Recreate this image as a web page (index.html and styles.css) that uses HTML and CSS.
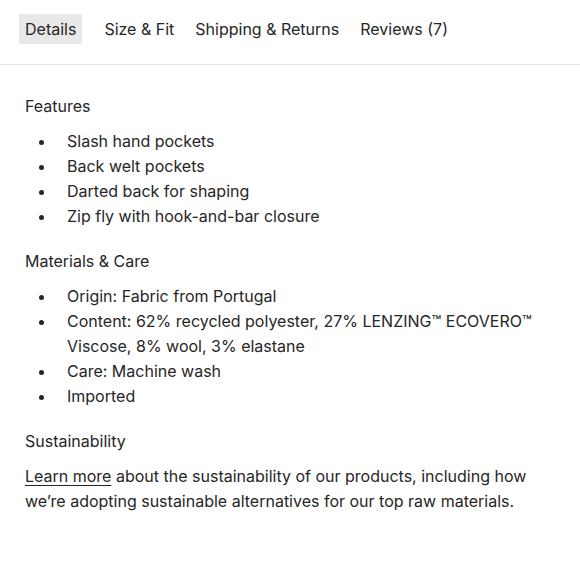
FILE: index.html
```html
<!DOCTYPE html>
<html>
<head>
<meta charset="utf-8">
<link rel="stylesheet" href="styles.css">
</head>
<body>
<nav class="tabs">
  <span class="tab active">Details</span>
  <span class="tab">Size &amp; Fit</span>
  <span class="tab">Shipping &amp; Returns</span>
  <span class="tab">Reviews (7)</span>
</nav>
<main class="content">
  <h3 class="heading">Features</h3>
  <ul class="list">
    <li>Slash hand pockets</li>
    <li>Back welt pockets</li>
    <li>Darted back for shaping</li>
    <li>Zip fly with hook-and-bar closure</li>
  </ul>
  <h3 class="heading">Materials &amp; Care</h3>
  <ul class="list">
    <li>Origin: Fabric from Portugal</li>
    <li>Content: 62% recycled polyester, 27% LENZING™ ECOVERO™ Viscose, 8% wool, 3% elastane</li>
    <li>Care: Machine wash</li>
    <li>Imported</li>
  </ul>
  <h3 class="heading">Sustainability</h3>
  <p class="para"><a class="link" href="#">Learn more</a> about the sustainability of our products, including how we’re adopting sustainable alternatives for our top raw materials.</p>
</main>
</body>
</html>
```
FILE: styles.css
```css
html, body {
  margin: 0;
  padding: 0;
  background: #fff;
}
body {
  font-family: Inter, "Open Sans", sans-serif;
  color: #262626;
  font-size: 16px;
  line-height: 25px;
}
.tabs {
  display: flex;
  gap: 9px;
  padding: 14px 19px 0;
  height: 50px;
  border-bottom: 1px solid #e6e6e6;
}
.tab {
  height: 30px;
  line-height: 31px;
  padding: 0 6px;
  font-size: 16px;
}
.tab.active {
  background: #e8e8e8;
  margin-right: 7px;
}
.content {
  padding: 29px 25px 0;
}
.heading {
  margin: 0;
  font-size: 16px;
  font-weight: 400;
  line-height: 25px;
}
.list {
  margin: 10px 0 20px;
  padding: 0 0 0 42px;
  list-style: none;
  width: 480px;
}
.list li {
  position: relative;
}
.list li::before {
  content: "";
  position: absolute;
  left: -28px;
  top: 11px;
  width: 5px;
  height: 5px;
  border-radius: 50%;
  background: #262626;
}
.para {
  margin: 10px 0 0;
  width: 532px;
}
.link {
  color: inherit;
  text-decoration: underline;
  text-underline-offset: 3px;
  text-decoration-thickness: 1px;
}
```
